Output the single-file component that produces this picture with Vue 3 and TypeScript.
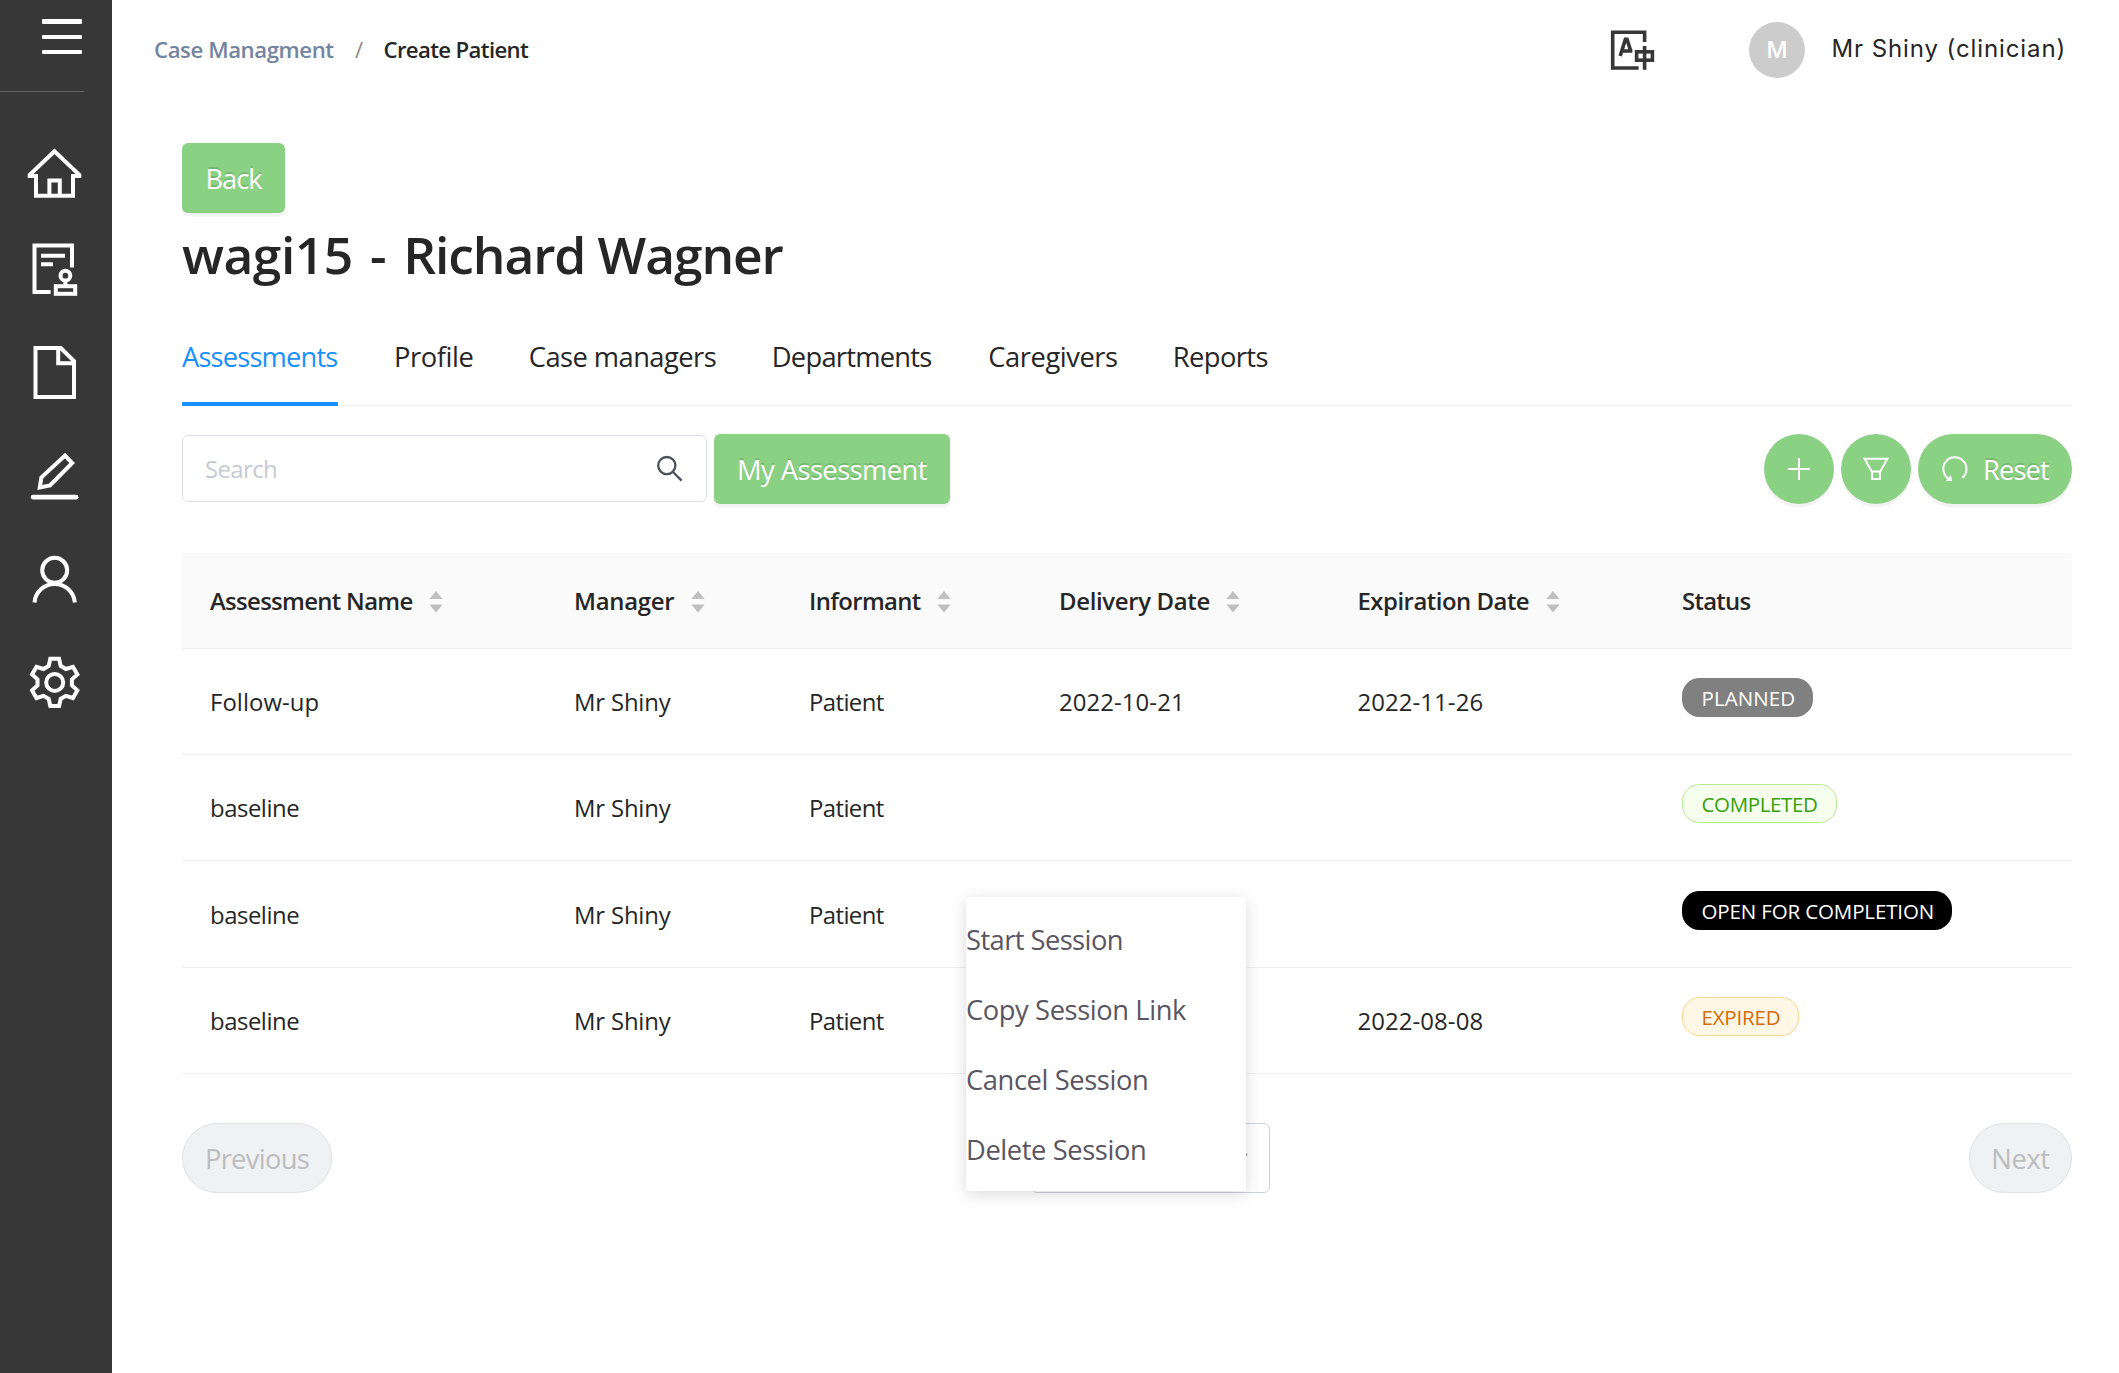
<script setup lang="ts">
interface Row {
  name: string
  manager: string
  informant: string
  delivery: string
  expiration: string
  status: string
  tone: string
}

const tabs = ['Assessments', 'Profile', 'Case managers', 'Departments', 'Caregivers', 'Reports']

const columns = [
  { label: 'Assessment Name', sortable: true },
  { label: 'Manager', sortable: true },
  { label: 'Informant', sortable: true },
  { label: 'Delivery Date', sortable: true },
  { label: 'Expiration Date', sortable: true },
  { label: 'Status', sortable: false },
]

const rows: Row[] = [
  { name: 'Follow-up', manager: 'Mr Shiny', informant: 'Patient', delivery: '2022-10-21', expiration: '2022-11-26', status: 'PLANNED', tone: 'planned' },
  { name: 'baseline', manager: 'Mr Shiny', informant: 'Patient', delivery: '', expiration: '', status: 'COMPLETED', tone: 'completed' },
  { name: 'baseline', manager: 'Mr Shiny', informant: 'Patient', delivery: '', expiration: '', status: 'OPEN FOR COMPLETION', tone: 'open' },
  { name: 'baseline', manager: 'Mr Shiny', informant: 'Patient', delivery: '', expiration: '2022-08-08', status: 'EXPIRED', tone: 'expired' },
]

const menuItems = ['Start Session', 'Copy Session Link', 'Cancel Session', 'Delete Session']

// Six-toothed gear outline centred on the origin
const gear = Array.from({ length: 6 }, (_, k) => {
  const a = (k * Math.PI) / 3
  return [[-6, -16.4], [-4.4, -23.6], [4.4, -23.6], [6, -16.4]]
    .map(([x, y]) => `${(x * Math.cos(a) - y * Math.sin(a)).toFixed(2)},${(x * Math.sin(a) + y * Math.cos(a)).toFixed(2)}`)
    .join(' ')
}).join(' ')
</script>

<template>
  <div class="app">
    <aside class="sidebar">
      <div class="burger-box">
        <div class="burger"><i></i><i></i><i></i></div>
      </div>
      <nav class="nav">
        <svg viewBox="26 145 56 56">
          <path d="M54.5 151.2 L29.7 174.8 V176.1 H36 V195.8 H73 V176.1 H79.3 V174.8 Z" />
          <path d="M49.4 195 V180.4 H59.8 V195" />
        </svg>
        <svg viewBox="26 242 56 56">
          <path d="M72 267.5 V245.4 H34.5 V292 H50.6" />
          <path d="M41 255.7 H65 M41 264.3 H53 M65.4 281 V286" />
          <circle cx="65.4" cy="275.7" r="4.9" />
          <rect x="55.8" y="286.2" width="19.4" height="7.6" />
        </svg>
        <svg viewBox="26 345 56 56">
          <path d="M35.5 348 H60.8 L74 361 V397 H35.5 Z M58.2 348 V363.2 H74" />
        </svg>
        <svg viewBox="26 448 56 56">
          <path d="M65 455.6 L72.2 463 L50 485.4 L39.8 487.4 L41.4 477.4 Z" />
          <path class="thick" d="M33.2 497.2 H76" />
        </svg>
        <svg viewBox="26 551 56 56">
          <circle cx="54.7" cy="570.3" r="12.5" />
          <path d="M34.5 602.5 A20.2 20 0 0 1 74.8 602.5" />
        </svg>
        <svg viewBox="26 654 56 56">
          <g transform="translate(54.7 682.4)">
            <polygon :points="gear" />
            <circle r="8.5" />
          </g>
        </svg>
      </nav>
    </aside>

    <div class="page">
      <header class="header">
        <div class="crumbs">
          <span class="crumb-link">Case Managment</span>
          <span class="slash">/</span>
          <span class="crumb-here">Create Patient</span>
        </div>
        <div class="user">
          <svg class="lang" viewBox="1609 28 48 44">
            <path d="M1644.6 42 V32.2 H1612.7 V68 H1638.6" />
            <path d="M1620.2 56 L1625.4 39.4 H1627 L1630.8 51 M1622 51 H1632.4" />
            <path d="M1644.6 46 V69.8" />
            <rect x="1636.6" y="51.8" width="15.8" height="8.4" />
          </svg>
          <span class="avatar">M</span>
          <span class="user-name">Mr Shiny (clinician)</span>
        </div>
      </header>

      <main class="content">
        <button class="btn back"><span>Back</span></button>
        <h1>wagi15 - <span>Richard Wagner</span></h1>

        <div class="tabs">
          <div v-for="(t, i) in tabs" :key="t" class="tab" :class="{ active: i === 0 }">{{ t }}</div>
        </div>

        <div class="toolbar">
          <div class="search">
            <span>Search</span>
            <svg viewBox="654 454 32 30">
              <circle cx="666.8" cy="465.6" r="8.6" />
              <path d="M673 472 L681.6 480.6" />
            </svg>
          </div>
          <button class="btn mine"><span>My Assessment</span></button>
          <div class="actions">
            <button class="btn round">
              <svg viewBox="-35 -35 70 70"><path d="M-11 0 H11 M0 -11 V11" /></svg>
            </button>
            <button class="btn round">
              <svg viewBox="-35 -35 70 70">
                <path d="M-11.4 -10.2 H11.4 L4.2 2.4 H-4.2 Z M-3.9 2.4 V10 H3.9 V2.4" />
              </svg>
            </button>
            <button class="btn reset">
              <svg viewBox="-14 -14 28 28">
                <path d="M-5.4 10.2 A11.6 11.6 0 1 1 7.2 8.9" />
                <path class="solid" d="M-9.2 11.9 L-3 12 L-4 6 Z" />
              </svg>
              <span>Reset</span>
            </button>
          </div>
        </div>

        <div class="table">
          <div class="tr head">
            <div v-for="c in columns" :key="c.label" class="td">
              <span>{{ c.label }}</span>
              <svg v-if="c.sortable" class="sorter" viewBox="0 0 14 22">
                <path d="M7 0 L13.6 8 H0.4 Z M0.4 13.6 H13.6 L7 21.6 Z" />
              </svg>
            </div>
          </div>
          <div v-for="(r, i) in rows" :key="i" class="tr row">
            <div class="td name">{{ r.name }}</div>
            <div class="td manager">{{ r.manager }}</div>
            <div class="td informant">{{ r.informant }}</div>
            <div class="td date">{{ r.delivery }}</div>
            <div class="td date">{{ r.expiration }}</div>
            <div class="td status"><span class="tag" :class="r.tone">{{ r.status }}</span></div>
          </div>
        </div>

        <div class="pager">
          <button class="pg prev"><span>Previous</span></button>
          <div class="select">
            <svg viewBox="0 0 20 12"><path d="M2 2 L10 9.5 L18 2" /></svg>
          </div>
          <button class="pg next"><span>Next</span></button>
        </div>
      </main>
    </div>

    <div class="menu">
      <div v-for="m in menuItems" :key="m" class="menu-item">{{ m }}</div>
    </div>
  </div>
</template>

<style>
body {
  margin: 0;
  background: #fff;
}
</style>

<style scoped>
.app {
  position: relative;
  display: flex;
  width: 2119px;
  height: 1373px;
  overflow: hidden;
  background: #fff;
  color: #262626;
  font-family: "Open Sans", "Noto Sans", sans-serif;
  font-size: 23.9px;
  white-space: nowrap;
}
svg {
  display: block;
  flex: none;
  fill: none;
  overflow: visible;
}
button {
  font: inherit;
  border: 0;
  margin: 0;
  padding: 0;
}

/* Sidebar */
.sidebar {
  flex: none;
  width: 112px;
  background: #373737;
}
.burger-box {
  box-sizing: border-box;
  width: 84px;
  height: 92px;
  padding: 19.4px 2px 0 0;
  border-bottom: 1px solid #666;
}
.burger {
  display: flex;
  flex-direction: column;
  gap: 11.2px;
  width: 40px;
  margin-left: auto;
}
.burger i {
  height: 4.2px;
  border-radius: 1px;
  background: #fff;
}
.nav {
  display: flex;
  flex-direction: column;
  gap: 47px;
  padding: 53px 0 0 26px;
}
.nav svg {
  width: 56px;
  height: 56px;
  stroke: #fff;
  stroke-width: 4;
}
.nav svg:first-child {
  margin-bottom: -6px;
}
.nav .thick {
  stroke-width: 4.8;
  stroke-linecap: round;
}

/* Header */
.page {
  flex: 1;
  min-width: 0;
}
.header {
  display: flex;
  align-items: center;
  justify-content: space-between;
  height: 100px;
  padding: 0 56px 0 42px;
}
.crumbs {
  display: flex;
  align-items: center;
  margin-top: -2px;
  font-size: 22.2px;
  font-weight: 600;
}
.crumb-link {
  width: 201px;
  color: #73859f;
  letter-spacing: -0.43px;
}
.slash {
  width: 28.5px;
  color: #8c8c8c;
  font-weight: 400;
}
.crumb-here {
  letter-spacing: -0.65px;
}
.user {
  display: flex;
  align-items: center;
}
.lang {
  width: 48px;
  height: 44px;
  stroke: #373737;
  stroke-width: 3.6;
}
.avatar {
  width: 56px;
  height: 56px;
  margin: 0 26px 0 92px;
  border-radius: 50%;
  background: #ccc;
  color: #fff;
  font: 500 23px/56px Inter, sans-serif;
  text-align: center;
}
.user-name {
  width: 232px;
  font: 400 24px/56px Inter, sans-serif;
  letter-spacing: 0.9px;
  text-indent: 0.5px;
  margin-top: -2px;
}

/* Content */
.content {
  padding: 43px 47px 0 70px;
}
.btn {
  display: flex;
  align-items: center;
  justify-content: center;
  height: 70px;
  border-radius: 6px;
  background: #8ad183;
  color: #fff;
  font-size: 27.3px;
  letter-spacing: -0.54px;
  text-shadow: 0 -2px 0 rgba(0, 0, 0, 0.12);
  box-shadow: 0 3.5px 0 rgba(0, 0, 0, 0.043);
}
.btn span {
  padding-top: 1px;
}
.back {
  width: 103px;
  letter-spacing: -1.1px;
}
h1 {
  margin: 6px 0 0;
  font-size: 51.5px;
  line-height: 70px;
  font-weight: 600;
  letter-spacing: -0.5px;
  word-spacing: 4.4px;
}
h1 span {
  letter-spacing: -1.1px;
  word-spacing: 0;
}
.tabs {
  display: flex;
  gap: 56px;
  height: 97px;
  margin-top: 20px;
  box-shadow: inset 0 -1px 0 #f0f0f0;
  font-size: 27.3px;
  line-height: 96px;
}
.tab {
  box-sizing: border-box;
  height: 97px;
}
.tab.active {
  color: #1890ff;
  border-bottom: 4px solid #1890ff;
}
.tab:nth-child(1) { width: 156px; letter-spacing: -0.84px; }
.tab:nth-child(2) { width: 78.8px; letter-spacing: -0.42px; }
.tab:nth-child(3) { width: 187px; letter-spacing: -0.55px; }
.tab:nth-child(4) { width: 160.5px; letter-spacing: -0.74px; }
.tab:nth-child(5) { width: 128.5px; letter-spacing: -0.44px; }
.tab:nth-child(6) { width: 95.5px; letter-spacing: -0.58px; }

.toolbar {
  display: flex;
  align-items: flex-start;
  margin-top: 28px;
}
.search {
  box-sizing: border-box;
  display: flex;
  align-items: center;
  justify-content: space-between;
  width: 525px;
  height: 67px;
  margin: 1px 7px 0 0;
  padding: 0 20px 0 22px;
  border: 1px solid #dcdfe3;
  border-radius: 6px;
  color: #c6cad3;
  letter-spacing: -0.6px;
}
.search svg {
  width: 32px;
  height: 30px;
  stroke: #4a4f58;
  stroke-width: 2.3;
}
.mine {
  width: 236px;
}
.actions {
  display: flex;
  gap: 7px;
  margin-left: auto;
}
.round {
  width: 70px;
  border-radius: 50%;
}
.round svg {
  width: 70px;
  height: 70px;
  stroke: #fff;
  stroke-width: 2;
}
.reset {
  width: 154px;
  border-radius: 35px;
  gap: 14px;
  letter-spacing: -0.88px;
}
.reset svg {
  width: 28px;
  height: 28px;
  stroke: #fff;
  stroke-width: 2;
}
.reset .solid {
  fill: #fff;
  stroke: none;
}

/* Table */
.table {
  margin-top: 49px;
}
.tr {
  box-sizing: border-box;
  display: grid;
  grid-template-columns: 364px 235px 250px 298.5px 325px 1fr;
  align-items: center;
  height: 106px;
  border-bottom: 1px solid #f0f0f0;
}
.row:nth-child(4) {
  height: 107px;
}
.td {
  display: flex;
  align-items: center;
  padding-left: 28px;
}
.td.status,
.head .td:nth-child(6) {
  padding-left: 27.5px;
}
.head {
  height: 96px;
  border-radius: 4px 4px 0 0;
  background: #fafafa;
  font-weight: 600;
}
.head .td:nth-child(1) { letter-spacing: -0.67px; }
.head .td:nth-child(2) { letter-spacing: -0.27px; }
.head .td:nth-child(3) { letter-spacing: -0.62px; }
.head .td:nth-child(4) { letter-spacing: -0.32px; }
.head .td:nth-child(5) { letter-spacing: -0.48px; }
.head .td:nth-child(6) { letter-spacing: -0.71px; }
.sorter {
  width: 14px;
  height: 22px;
  margin: 2px 0 0 16.5px;
  fill: #bfbfbf;
}
.name { letter-spacing: -0.46px; }
.row:nth-child(2) .name { letter-spacing: 0.05px; }
.manager { letter-spacing: -0.17px; }
.informant { letter-spacing: -0.59px; }
.date { letter-spacing: 0.1px; }
.tag {
  box-sizing: border-box;
  height: 39px;
  margin-bottom: 8px;
  border: 1px solid transparent;
  border-radius: 17.5px;
  padding-left: 18.5px;
  font-size: 20.5px;
  line-height: 38px;
}
.planned { width: 131px; background: #808080; color: #fff; letter-spacing: 0.1px; }
.completed { width: 155px; background: #f6ffed; border-color: #b7eb8f; color: #389e0d; letter-spacing: -0.36px; }
.open { width: 270px; background: #000; color: #fff; letter-spacing: -0.13px; }
.expired { width: 117px; background: #fff7e6; border-color: #ffd591; color: #d46b08; letter-spacing: -0.18px; }

/* Pagination */
.pager {
  display: flex;
  justify-content: space-between;
  margin-top: 49px;
}
.pg {
  box-sizing: border-box;
  height: 70px;
  border: 1px solid #dfe2e6;
  border-radius: 35px;
  background: #f0f1f3;
  color: #bcbdbf;
  font-size: 27.3px;
}
.prev { width: 150px; letter-spacing: -0.68px; }
.next { width: 103px; letter-spacing: -0.39px; }
.select {
  box-sizing: border-box;
  display: flex;
  align-items: center;
  justify-content: flex-end;
  width: 239px;
  height: 70px;
  padding-right: 20px;
  border: 1px solid #cdd1d8;
  border-radius: 6px;
}
.select svg {
  width: 20px;
  height: 12px;
  margin-top: 0;
  stroke: #8c8c8c;
  stroke-width: 2;
}

/* Row context menu, floating above the table */
.menu {
  position: absolute;
  left: 966px;
  top: 897px;
  box-sizing: border-box;
  width: 280px;
  height: 294px;
  padding: 8px 0 6px;
  border-radius: 3px;
  background: #fff;
  box-shadow: 0 3px 16px rgba(0, 0, 0, 0.15);
  color: #5a5661;
  font-size: 27.3px;
  line-height: 70px;
}
.menu-item { letter-spacing: -0.4px; }
.menu-item:first-child { letter-spacing: -0.56px; }
</style>
